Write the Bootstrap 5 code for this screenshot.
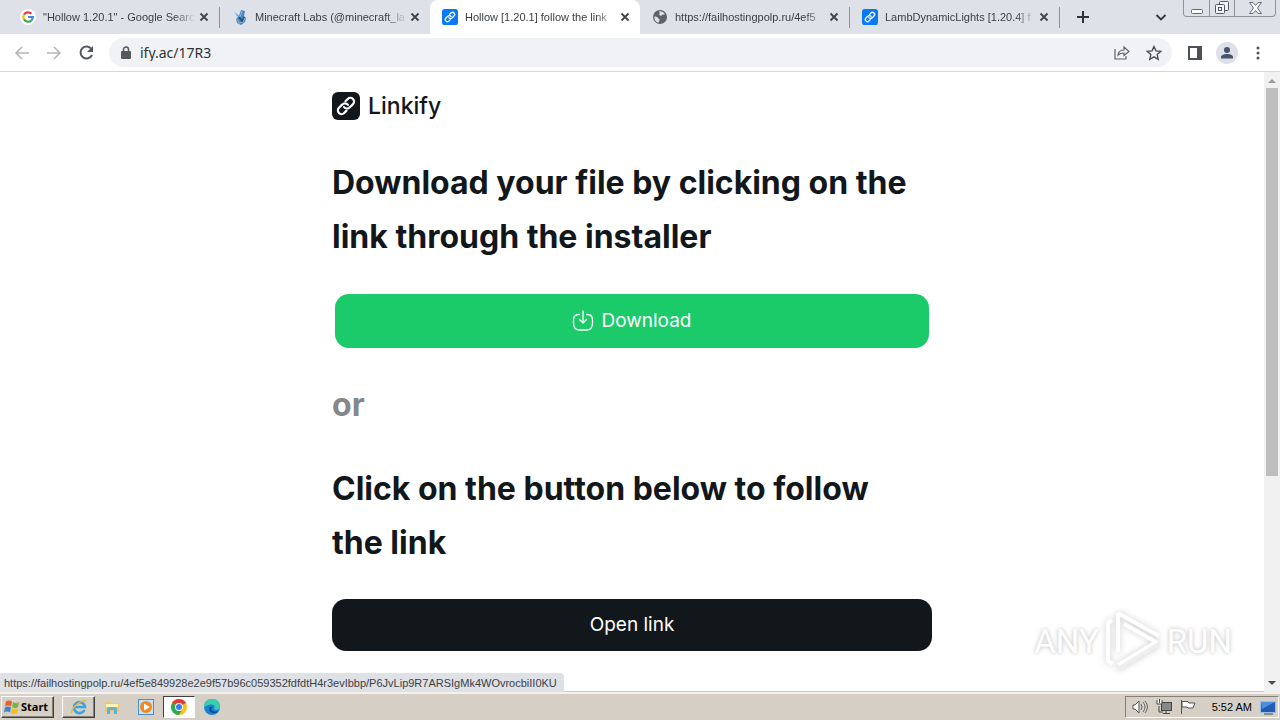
<!DOCTYPE html>
<html lang="en">
<head>
<meta charset="utf-8">
<meta name="viewport" content="width=device-width, initial-scale=1">
<title>Hollow [1.20.1] follow the link</title>
<link href="https://cdn.jsdelivr.net/npm/bootstrap@5.3.0/dist/css/bootstrap.min.css" rel="stylesheet">
<style>
  body { font-family: "Liberation Sans", Roboto, sans-serif; font-size: 11px; line-height: 16px; color: #3c4043; background: #fff; }
  svg { display: block; flex: none; }
  button { border: 0; padding: 0; background: none; color: inherit; }
  a { color: inherit; text-decoration: none; }

  .tabstrip { background: #dee1e8; height: 34px; padding-left: 10px; }
  .tab { flex: 0 1 210px; min-width: 0; height: 34px; padding: 0 7px 0 12px; }
  .tab.on { background: #fff; border-radius: 8px 8px 0 0; }
  .tab.line { border-right: 1px solid; border-image: linear-gradient(transparent 8px, #8c9097 8px 27px, transparent 27px) 1; }
  .tab-name { flex: 1 1 0; min-width: 0; margin-left: 7px; overflow: hidden; white-space: nowrap; -webkit-mask-image: linear-gradient(90deg, #000 86%, transparent); mask-image: linear-gradient(90deg, #000 86%, transparent); }
  .tab:first-child { padding-left: 10px; }
  .wincontrols { height: 17px; border: 1px solid #8d929b; border-top: 0; border-radius: 0 0 4px 4px; margin-right: 4px; }
  .wincontrols button { height: 16px; width: 25px; display: flex; justify-content: center; align-items: center; }
  .wincontrols button + button { border-left: 1px solid #8d929b; }
  .wincontrols button.wide { width: 41px; }

  .toolbar { height: 38px; padding: 0 16px 0 13px; border-bottom: 1px solid #d5d7d9; }
  .omnibox { background: #f0f2f5; border-radius: 15px; height: 29px; padding: 0 10px 0 11px; margin-left: 14px; }
  .omnibox input { border: 0; background: none; outline: 0; padding: 0; color: #303336; font-size: 14px; font-family: "Noto Sans", sans-serif; }
  .side { gap: 14px; margin-left: 16px; }
  .avatar { width: 22px; height: 22px; border-radius: 50%; background: #dde1e7; }

  .linkify { max-width: 600px; color: #12171b; font-family: Inter, sans-serif; padding: 20px 0; }
  .brand-name { font-size: 23px; line-height: 28px; font-weight: 500; }
  .linkify h1, .linkify h2, .linkify .or { font-size: 32px; line-height: 54px; font-weight: 700; margin: 0; }
  .linkify h1 { margin-top: 36px; }
  .linkify h2 { margin-top: 30px; }
  .linkify .or { color: #858789; }
  .cta { border-radius: 14px; color: #fff; font-size: 19px; line-height: 28px; display: flex; align-items: center; justify-content: center; gap: 7px; }
  .cta.green { background: #1bca68; height: 54px; margin: 30px 3px; }
  .cta.dark { background: #12171c; height: 52px; width: 100%; margin-top: 29px; }

  .scroller { width: 16px; background: #f1f1f1; }
  .thumb { flex: 0 0 66%; background: #bebebe; margin: 0 2px; }
  .status { left: 0; bottom: 0; background: #dee1e6; border-radius: 0 4px 0 0; height: 19px; padding: 2px 7px 0 4px; white-space: nowrap; }
  .watermark { right: 48px; bottom: 18px; color: #fff; font-family: Roboto, sans-serif; font-size: 33px; line-height: 64px; text-shadow: 0 0 5px #ccc, 0 0 3px #ddd; gap: 4px; pointer-events: none; }
  .watermark svg { filter: drop-shadow(0 0 3px #ccc); }

  .taskbar { height: 28px; background: #d6cfc6; border-top: 2px solid #f4f1ea; box-shadow: 0 -1px #cfccc4; padding: 0 1px; color: #000; }
  .raised { border: 1px solid; border-color: #fff #404040 #404040 #fff; box-shadow: inset -1px -1px #858078; height: 22px; }
  .start { font-size: 11px; font-weight: 700; width: 53px; gap: 1px; font-family: "Noto Sans", sans-serif; padding-left: 2px; color: #000; }
  .task { width: 34px; height: 22px; display: flex; align-items: center; justify-content: center; }
  .task.raised { width: 33px; }
  .task.sunken { width: 32px; background: #fff; border: 1px solid; border-color: #404040 #fff #fff #404040; }
  .tray { border: 1px solid; border-color: #858078 #fff #fff #858078; height: 22px; padding: 0 2px 0 6px; }
</style>
</head>
<body class="d-flex flex-column min-vh-100">

<svg width="0" height="0" class="position-absolute" aria-hidden="true">
  <symbol id="chain" viewBox="0 0 28 28">
    <g fill="none" stroke="#fff" stroke-width="2.800" stroke-linecap="round" stroke-linejoin="round" transform="translate(4.600 4.600) scale(.78)">
      <path d="M9.500 13.500a5 5 0 0 0 7.500.2l4-4a4.600 4.600 0 0 0-6.700-6.700l-3 3"/>
      <path d="M14.500 10.500a5 5 0 0 0-7.500-.2l-4 4a4.600 4.600 0 0 0 6.700 6.700l3-3"/>
    </g>
  </symbol>
  <symbol id="cross" viewBox="0 0 16 16"><path d="M4.500 4.500l7 7M11.500 4.500l-7 7" stroke="#3f4348" stroke-width="1.800"/></symbol>
</svg>

<header>
  <div class="tabstrip d-flex align-items-center">
    <div class="tab line d-flex align-items-center">
      <svg width="16" height="16" viewBox="0 0 16 16"><circle cx="8" cy="8" r="8" fill="#fff"/><g fill="none" stroke-width="2.200"><path d="M4 5.600A4.800 4.800 0 0 1 11.500 4.700" stroke="#ea4335"/><path d="M4 5.600a4.800 4.800 0 0 0 0 4.800" stroke="#fbbc05"/><path d="M4 10.400a4.800 4.800 0 0 0 7.200 1.200" stroke="#34a853"/><path d="M8 8h4.800a4.800 4.800 0 0 1-1.600 3.600" stroke="#4285f4"/></g></svg>
      <span class="tab-name">"Hollow 1.20.1" - Google Searc</span>
      <button aria-label="Close tab"><svg width="16" height="16"><use href="#cross"/></svg></button>
    </div>
    <div class="tab d-flex align-items-center">
      <svg width="16" height="16" viewBox="0 0 16 16"><path d="M2 3l5 4 2-6 4 1-1 5 2 2-1 4-4 3-4-2-1-4 2-2z" fill="#4c86bd"/><path d="M3 4l5 4 2-6M5 10l2 4 4-1 2-4" fill="none" stroke="#8cb8de"/><path d="M7 8l3 4 2-4" fill="none" stroke="#24527e" stroke-width="1.500"/></svg>
      <span class="tab-name">Minecraft Labs (@minecraft_la</span>
      <button aria-label="Close tab"><svg width="16" height="16"><use href="#cross"/></svg></button>
    </div>
    <div class="tab on d-flex align-items-center">
      <svg width="16" height="16" viewBox="0 0 28 28"><rect width="28" height="28" rx="5" fill="#0878f9"/><use href="#chain" width="28" height="28"/></svg>
      <span class="tab-name">Hollow [1.20.1] follow the link</span>
      <button aria-label="Close tab"><svg width="16" height="16"><use href="#cross"/></svg></button>
    </div>
    <div class="tab line d-flex align-items-center">
      <svg width="16" height="16" viewBox="0 0 16 16"><circle cx="8" cy="8" r="7" fill="#5f6368"/><path d="M2.500 7.500c2 0 3 .5 3.500 1.500s2 1 1.500 2.500-1 1.500-1 2.300C3.500 13 2 10.500 2.500 7.500zM7 2.500c2-.5 4.500.5 5.800 2.500-1 1-1.800 0-2.500 1s-2 1-2.800 0 1-1.500-.5-3.500z" fill="#dee1e8"/></svg>
      <span class="tab-name">https://failhostingpolp.ru/4ef5</span>
      <button aria-label="Close tab"><svg width="16" height="16"><use href="#cross"/></svg></button>
    </div>
    <div class="tab line d-flex align-items-center">
      <svg width="16" height="16" viewBox="0 0 28 28"><rect width="28" height="28" rx="5" fill="#0878f9"/><use href="#chain" width="28" height="28"/></svg>
      <span class="tab-name">LambDynamicLights [1.20.4] f</span>
      <button aria-label="Close tab"><svg width="16" height="16"><use href="#cross"/></svg></button>
    </div>
    <button class="ms-3" aria-label="New tab"><svg width="14" height="14" viewBox="0 0 14 14"><path d="M7 1v12M1 7h12" stroke="#2f3338" stroke-width="2"/></svg></button>
    <button class="ms-auto me-3" aria-label="Search tabs"><svg width="12" height="12" viewBox="0 0 12 12"><path d="M1.500 4L6 8.500 10.500 4" fill="none" stroke="#33373c" stroke-width="1.800"/></svg></button>
    <div class="wincontrols d-flex align-self-start">
      <button aria-label="Minimize"><svg width="12" height="14" viewBox="0 0 12 14"><rect x=".5" y="8.500" width="11" height="4" rx="1" fill="#fff" stroke="#62666e"/></svg></button>
      <button aria-label="Restore"><svg width="14" height="14" viewBox="0 0 14 14"><g fill="#f2f4f7" stroke="#555a62"><rect x="4.500" y=".5" width="9" height="9" rx="1"/><rect x=".5" y="3.500" width="9" height="9" rx="1"/><rect x="3.500" y="6.500" width="3" height="3"/></g></svg></button>
      <button class="wide" aria-label="Close"><svg width="13" height="12" viewBox="0 0 13 12"><path d="M.5.5h3.500l2.500 3 2.500-3h3.500L8.500 6l4 5.500H9l-2.500-3-2.500 3H.5l4-5.500z" fill="#fff" stroke="#666a72"/></svg></button>
    </div>
  </div>

  <div class="toolbar d-flex align-items-center">
    <button aria-label="Back"><svg width="18" height="18" viewBox="0 0 18 18"><path d="M16 9H3M9 3L3 9l6 6" fill="none" stroke="#b5b7b9" stroke-width="1.600"/></svg></button>
    <button class="ms-3" aria-label="Forward"><svg width="16" height="18" viewBox="0 0 16 18"><path d="M0 9h13M7 3l6 6-6 6" fill="none" stroke="#b5b7b9" stroke-width="1.600"/></svg></button>
    <button class="ms-3" aria-label="Reload"><svg width="16" height="16" viewBox="0 0 16 16"><path d="M12.500 4A6 6 0 1 0 13 10" fill="none" stroke="#54585d" stroke-width="2"/><path d="M14 1v6H8z" fill="#54585d"/></svg></button>
    <div class="omnibox d-flex align-items-center flex-fill">
      <svg width="12" height="14" viewBox="0 0 12 14"><rect x="1" y="5" width="10" height="8" rx="1" fill="#54585d"/><path d="M3.500 5V3.500a2.500 2.500 0 0 1 5 0V5" fill="none" stroke="#54585d" stroke-width="1.500"/></svg>
      <input class="flex-fill mx-2" type="text" value="ify.ac/17R3" aria-label="Address">
      <button aria-label="Share"><svg width="16" height="16" viewBox="0 0 16 16"><path d="M1 4v10h11v-3M4 10c.5-3.500 2.500-5 6-5V2l5 4.500-5 4V8c-3 0-4.500.5-6 2z" fill="none" stroke="#5f6368" stroke-width="1.200"/></svg></button>
      <button class="ms-3" aria-label="Bookmark"><svg width="16" height="16" viewBox="0 0 16 16"><path d="M8 1.500l2 4.400 4.800.5-3.600 3.200 1 4.800L8 11.900l-4.200 2.500 1-4.800L1.200 6.400 6 5.900z" fill="none" stroke="#4d5156" stroke-width="1.400"/></svg></button>
    </div>
    <div class="side d-flex align-items-center">
      <button aria-label="Side panel"><svg width="14" height="14" viewBox="0 0 14 14"><path d="M1 1h12v12H1z" fill="#fff" stroke="#4d5156" stroke-width="2"/><path d="M9 1h4v12H9z" fill="#4d5156"/></svg></button>
      <button class="avatar d-flex align-items-center justify-content-center" aria-label="Profile"><svg width="14" height="14" viewBox="0 0 14 14"><circle cx="7" cy="4" r="3" fill="#46516b"/><path d="M1 12.500V11c0-2 3-3 6-3s6 1 6 3v1.500z" fill="#46516b"/></svg></button>
      <button aria-label="Menu"><svg width="12" height="16" viewBox="0 0 12 16" fill="#4d5156"><circle cx="6" cy="3" r="1.500"/><circle cx="6" cy="8" r="1.500"/><circle cx="6" cy="13" r="1.500"/></svg></button>
    </div>
  </div>
</header>

<main class="d-flex flex-fill position-relative">
  <div class="flex-fill">
    <div class="linkify mx-auto">
      <a href="#" class="d-flex align-items-center gap-2">
        <svg width="28" height="28" viewBox="0 0 28 28"><rect width="28" height="28" rx="6" fill="#12171b"/><use href="#chain" width="28" height="28"/></svg>
        <span class="brand-name">Linkify</span>
      </a>
      <h1>Download your file by clicking on the link through the installer</h1>
      <a href="#" class="cta green">
        <svg width="22" height="22" viewBox="0 0 22 22"><path d="M7.500 4.500h-1C3.500 4.500 1.500 6.500 1.500 10v3c0 5 2 7 6 7h7c4 0 6-2 6-7v-3c0-3.500-2-5.500-5-5.500h-1M11 1v12M7.500 9.500L11 13l3.500-3.500" fill="none" stroke="#fff" stroke-width="1.300" stroke-linecap="round" stroke-linejoin="round"/></svg>
        Download
      </a>
      <p class="or">or</p>
      <h2>Click on the button below to follow<br>the link</h2>
      <button class="cta dark">Open link</button>
    </div>
  </div>
  <div class="scroller d-flex flex-column">
    <svg width="16" height="16" viewBox="0 0 16 16"><path d="M4 11l4-4 4 4z" fill="#9b9b9b"/></svg>
    <div class="flex-fill d-flex flex-column"><div class="thumb"></div></div>
    <svg width="16" height="16" viewBox="0 0 16 16"><path d="M4 5h8l-4 4z" fill="#4a4a4a"/></svg>
  </div>
  <div class="watermark position-absolute d-flex align-items-center">
    <span>ANY</span>
    <svg width="60" height="64" viewBox="0 0 60 64"><path d="M15 3L56 26M15 3V42M9 10L5 13v38l5 3M21 14l32 18L15 55" fill="none" stroke="#fff" stroke-width="4" stroke-linejoin="round"/><path d="M56 34L15 59" fill="none" stroke="#eee" stroke-width="4"/></svg>
    <span>RUN</span>
  </div>
  <div class="status position-absolute">https://failhostingpolp.ru/4ef5e849928e2e9f57b96c059352fdfdtH4r3evIbbp/P6JvLip9R7ARSIgMk4WOvrocbiII0KU</div>
</main>

<footer class="taskbar d-flex align-items-center">
  <button class="start raised d-flex align-items-center">
    <svg width="16" height="16" viewBox="0 0 16 16"><path d="M2 2.500c2-1.500 4-1.500 6 0L7 7.500c-2-1.500-4-1.500-6 0z" fill="#e8602c"/><path d="M9 3c2 1.500 4 1.500 6 0l-1 5c-2 1.500-4 1.500-6 0z" fill="#77b43f"/><path d="M1 8.500c2-1.500 4-1.500 6 0l-1 5c-2-1.500-4-1.500-6 0z" fill="#3a86d0"/><path d="M8 9c2 1.500 4 1.500 6 0l-1 5c-2 1.500-4 1.500-6 0z" fill="#f5bd26"/></svg>
    Start
  </button>
  <button class="task raised ms-2" aria-label="Internet Explorer"><svg width="18" height="18" viewBox="0 0 18 18"><path d="M14.500 12A5.500 5.500 0 1 1 15 9H5" fill="none" stroke="#3ba3e0" stroke-width="2.600"/><path d="M1.500 15C1 11 10 2 16 2.500" fill="none" stroke="#ecb83a" stroke-width="1.500"/></svg></button>
  <button class="task" aria-label="Explorer"><svg width="16" height="16" viewBox="0 0 16 16"><path d="M1 3h5l1 1h8v9H1z" fill="#edcb62"/><path d="M2 5h12v3H2z" fill="#fff3b8"/><path d="M3 15V10q0-2 2-2h6q2 0 2 2v5h-3v-4H6v4z" fill="#67afd9"/></svg></button>
  <button class="task" aria-label="Media Player"><svg width="16" height="16" viewBox="0 0 16 16"><rect x=".5" y=".5" width="15" height="15" fill="#c8e0f5" stroke="#4d8fc8"/><circle cx="8" cy="8" r="6" fill="#f08a1c"/><path d="M6 4.500v7L12 8z" fill="#fff"/></svg></button>
  <button class="task sunken" aria-label="Chrome"><svg width="16" height="16" viewBox="0 0 16 16"><circle cx="8" cy="8" r="8" fill="#fbc116"/><path d="M8 8L1.100 4A8 8 0 0 1 14.900 4z" fill="#e33b2e"/><path d="M8 8L1.100 4A8 8 0 0 0 8 16l3.500-6z" fill="#2da94f"/><circle cx="8" cy="8" r="4" fill="#fff"/><circle cx="8" cy="8" r="3" fill="#3b7ded"/></svg></button>
  <button class="task" aria-label="Edge"><svg width="16" height="16" viewBox="0 0 16 16"><circle cx="8" cy="8" r="8" fill="#1583d3"/><path d="M0 8a8 8 0 0 1 16-1c0 3-2 4-4 4-2.500 0-2-1.500-1.500-2.500C11 6 8 5 5 6 2 6.500 1 8 0 8z" fill="#3ccbb0"/><path d="M5.500 8c-1 3 1 6 4 6 2 0 4-.5 5-2-2 1-6 1-7-1-.5-1 0-2 .5-3z" fill="#0c438d"/></svg></button>
  <div class="tray ms-auto d-flex align-items-center gap-2">
    <svg width="16" height="16" viewBox="0 0 16 16"><path d="M1 6h2l4-4v12l-4-4H1z" fill="#fff" stroke="#555"/><path d="M9 5q2 3 0 6M11 3q4 5 0 10M13 2q5 6 0 12" fill="none" stroke="#666"/></svg>
    <svg width="16" height="16" viewBox="0 0 16 16"><rect x="5.500" y="3.500" width="10" height="8" fill="#888" stroke="#444"/><path d="M7 14.500h7M10 12v2M3 7v6h4" stroke="#444" fill="none"/><path d="M1 1v4h5V1M3.500 0v4" stroke="#444" fill="#fff"/></svg>
    <svg width="16" height="16" viewBox="0 0 16 16"><path d="M1.500 1v14M2 2.500h6l1 1.500h6l-2 5H8L7 8H2z" fill="#fff" stroke="#555"/></svg>
    <span class="ms-2">5:52 AM</span>
    <svg width="16" height="16" viewBox="0 0 16 16"><rect x=".5" y="2.500" width="15" height="11" fill="#245cb4" stroke="#9cbfe6"/><path d="M1 3h14L2 10z" fill="#4f8ede"/><path d="M4 15h9" stroke="#444"/></svg>
  </div>
</footer>
<script src="https://cdn.jsdelivr.net/npm/bootstrap@5.3.0/dist/js/bootstrap.bundle.min.js"></script>
</body>
</html>
